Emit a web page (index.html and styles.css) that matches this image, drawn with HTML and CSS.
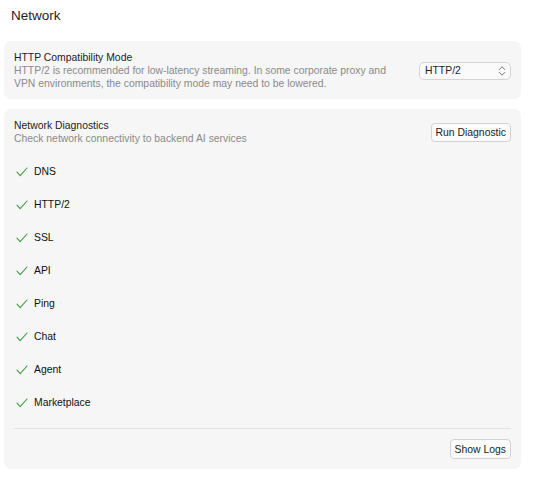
FILE: index.html
```html
<!DOCTYPE html>
<html>
<head>
<meta charset="utf-8">
<link rel="stylesheet" href="styles.css">
</head>
<body>
<div class="page">
  <h1 class="title">Network</h1>
  <section class="card card-http">
    <div class="text">
      <div class="card-title">HTTP Compatibility Mode</div>
      <div class="card-desc">HTTP/2 is recommended for low-latency streaming. In some corporate proxy and VPN environments, the compatibility mode may need to be lowered.</div>
    </div>
    <div class="select">
      <span>HTTP/2</span>
      <svg class="chev" width="8" height="12" viewBox="0 0 8 12"><path d="M1.2 4.6 L4 1.8 L6.8 4.6 M1.2 7.4 L4 10.2 L6.8 7.4" fill="none" stroke="#777" stroke-width="1" stroke-linecap="round" stroke-linejoin="round"/></svg>
    </div>
  </section>
  <section class="card card-diag">
    <div class="diag-head">
      <div class="text">
        <div class="card-title">Network Diagnostics</div>
        <div class="card-desc">Check network connectivity to backend AI services</div>
      </div>
      <button class="btn">Run Diagnostic</button>
    </div>
    <ul class="checks">
      <li><svg class="ok" width="12" height="10" viewBox="0 0 12 10"><path d="M1 5.2 L4.2 8.6 L11 1" fill="none" stroke="#3f9b44" stroke-width="1.1" stroke-linecap="round" stroke-linejoin="round"/></svg><span>DNS</span></li>
      <li><svg class="ok" width="12" height="10" viewBox="0 0 12 10"><path d="M1 5.2 L4.2 8.6 L11 1" fill="none" stroke="#3f9b44" stroke-width="1.1" stroke-linecap="round" stroke-linejoin="round"/></svg><span>HTTP/2</span></li>
      <li><svg class="ok" width="12" height="10" viewBox="0 0 12 10"><path d="M1 5.2 L4.2 8.6 L11 1" fill="none" stroke="#3f9b44" stroke-width="1.1" stroke-linecap="round" stroke-linejoin="round"/></svg><span>SSL</span></li>
      <li><svg class="ok" width="12" height="10" viewBox="0 0 12 10"><path d="M1 5.2 L4.2 8.6 L11 1" fill="none" stroke="#3f9b44" stroke-width="1.1" stroke-linecap="round" stroke-linejoin="round"/></svg><span>API</span></li>
      <li><svg class="ok" width="12" height="10" viewBox="0 0 12 10"><path d="M1 5.2 L4.2 8.6 L11 1" fill="none" stroke="#3f9b44" stroke-width="1.1" stroke-linecap="round" stroke-linejoin="round"/></svg><span>Ping</span></li>
      <li><svg class="ok" width="12" height="10" viewBox="0 0 12 10"><path d="M1 5.2 L4.2 8.6 L11 1" fill="none" stroke="#3f9b44" stroke-width="1.1" stroke-linecap="round" stroke-linejoin="round"/></svg><span>Chat</span></li>
      <li><svg class="ok" width="12" height="10" viewBox="0 0 12 10"><path d="M1 5.2 L4.2 8.6 L11 1" fill="none" stroke="#3f9b44" stroke-width="1.1" stroke-linecap="round" stroke-linejoin="round"/></svg><span>Agent</span></li>
      <li><svg class="ok" width="12" height="10" viewBox="0 0 12 10"><path d="M1 5.2 L4.2 8.6 L11 1" fill="none" stroke="#3f9b44" stroke-width="1.1" stroke-linecap="round" stroke-linejoin="round"/></svg><span>Marketplace</span></li>
    </ul>
    <div class="footer">
      <button class="btn">Show Logs</button>
    </div>
  </section>
</div>
</body>
</html>
```

FILE: styles.css
```css
* { box-sizing: border-box; }
html, body { margin: 0; padding: 0; background: #ffffff; }
body {
  font-family: "Liberation Sans", Arial, sans-serif;
  color: #1d1d1f;
  -webkit-font-smoothing: antialiased;
}
.page {
  width: 517px;
  margin-left: 4px;
  padding-top: 7px;
}
.title {
  font-size: 13.5px;
  font-weight: 400;
  margin: 0 0 16px 7px;
  line-height: 18px;
  color: #1d1d1f;
}
.card {
  background: #f6f6f6;
  border-radius: 7px;
  padding: 0 10px;
}
.card-http {
  display: flex;
  align-items: center;
  justify-content: space-between;
  padding-top: 10px;
  padding-bottom: 9px;
  margin-bottom: 10px;
}
.card-title {
  font-size: 10.4px;
  line-height: 13px;
  color: #1d1d1f;
}
.card-desc {
  font-size: 10.4px;
  line-height: 13px;
  color: #8a8a8a;
}
.card-http .text { width: 395px; }
.select {
  width: 92px;
  height: 18px;
  border: 1px solid #d4d4d4;
  border-radius: 5px;
  background: #fafafa;
  display: flex;
  align-items: center;
  justify-content: space-between;
  padding: 0 4px 0 5px;
  font-size: 10.4px;
  color: #1d1d1f;
}
.chev { display: block; }
.card-diag {
  padding-top: 10px;
  padding-bottom: 10px;
}
.diag-head {
  display: flex;
  justify-content: space-between;
  align-items: flex-start;
}
.btn {
  font-family: inherit;
  font-size: 10.4px;
  color: #1d1d1f;
  background: #fbfbfb;
  border: 1px solid #d2d2d2;
  border-radius: 4px;
  height: 19px;
  padding: 0 4px;
  margin: 4px 0 0 0;
  line-height: 17px;
}
.checks {
  list-style: none;
  margin: 10px 0 0 0;
  padding: 0;
}
.checks li {
  height: 33px;
  display: flex;
  align-items: center;
  font-size: 10.4px;
  color: #111;
}
.ok { margin: 0 6px 0 2px; display: block; }
.footer {
  margin-top: 9px;
  border-top: 1px solid #e2e2e2;
  display: flex;
  justify-content: flex-end;
  padding-top: 10px;
}
.footer .btn { margin: 0; height: 20px; }
```
